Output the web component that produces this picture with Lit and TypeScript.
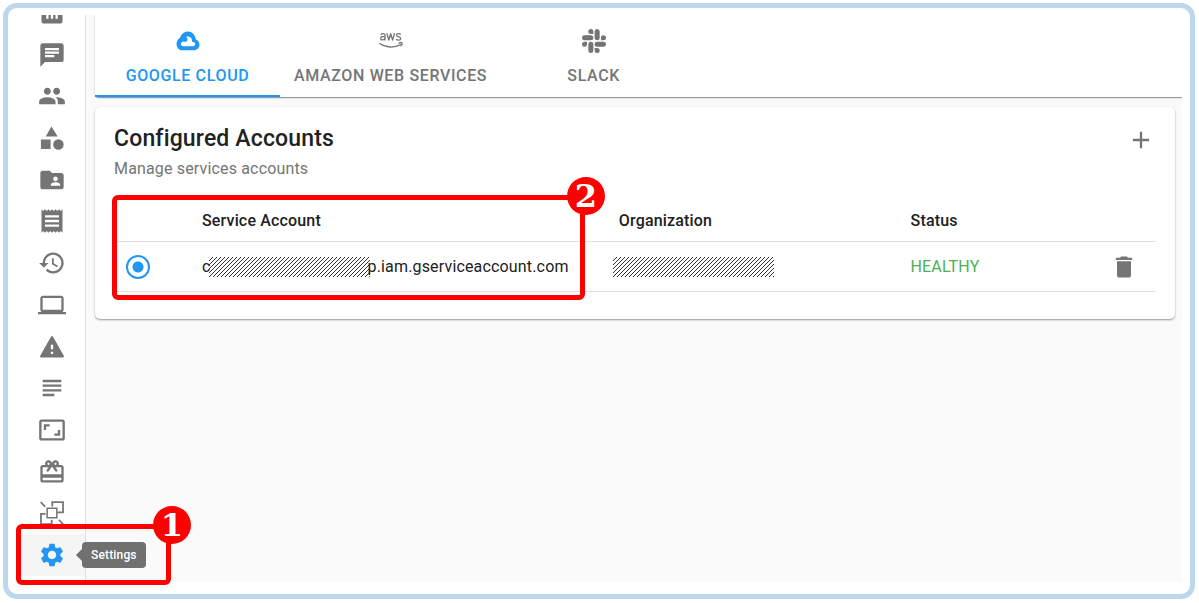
import { LitElement, html, css, svg } from "lit";
import { customElement, state } from "lit/decorators.js";

interface NavItem { label: string; path: string; }

const NAV: NavItem[] = [
  { label: "Dashboard", path: "M19 3H5c-1.1 0-2 .9-2 2v14c0 1.1.9 2 2 2h14c1.1 0 2-.9 2-2V5c0-1.100-.9-2-2-2zM9 17H7v-7h2v7zm4 0h-2V7h2v10zm4 0h-2v-4h2v4z" },
  { label: "Messages", path: "M20 2H4c-1.100 0-1.990.9-1.990 2L2 22l4-4h14c1.100 0 2-.9 2-2V4c0-1.100-.9-2-2-2zM6 9h12v2H6V9zm8 5H6v-2h8v2zm4-6H6V6h12v2z" },
  { label: "People", path: "M16 11c1.660 0 2.990-1.340 2.990-3S17.660 5 16 5c-1.660 0-3 1.340-3 3s1.340 3 3 3zm-8 0c1.660 0 2.990-1.340 2.990-3S9.660 5 8 5C6.340 5 5 6.340 5 8s1.340 3 3 3zm0 2c-2.330 0-7 1.170-7 3.500V19h14v-2.500c0-2.330-4.670-3.500-7-3.500zm8 0c-.290 0-.620.020-.970.050 1.160.840 1.970 1.970 1.970 3.450V19h6v-2.500c0-2.330-4.670-3.500-7-3.500z" },
  { label: "Categories", path: "M11.500 2.200 6.600 10.800h10.300zM2.500 13.200h8.300v8.300H2.500zM17.500 13a4.500 4.500 0 1 0 0 9a4.500 4.500 0 0 0 0-9z" },
  { label: "Shared folder", path: "M20 6h-8l-2-2H4c-1.100 0-1.990.9-1.990 2L2 18c0 1.100.9 2 2 2h16c1.100 0 2-.9 2-2V8c0-1.100-.9-2-2-2zm-5 3c1.100 0 2 .9 2 2s-.9 2-2 2-2-.9-2-2 .9-2 2-2zm4 8h-8v-1c0-1.330 2.670-2 4-2s4 .670 4 2v1z" },
  { label: "Receipts", path: "M18 17H6v-2h12v2zm0-4H6v-2h12v2zm0-4H6V7h12v2zM3 22l1.500-1.500L6 22l1.500-1.500L9 22l1.500-1.500L12 22l1.500-1.500L15 22l1.500-1.500L18 22l1.500-1.500L21 22V2l-1.500 1.500L18 2l-1.500 1.500L15 2l-1.500 1.500L12 2l-1.500 1.500L9 2 7.500 3.500 6 2 4.500 3.500 3 2v20z" },
  { label: "History", path: "M13 3c-4.970 0-9 4.030-9 9H1l3.890 3.890.070.140L9 12H6c0-3.870 3.130-7 7-7s7 3.130 7 7-3.130 7-7 7c-1.930 0-3.680-.790-4.940-2.060l-1.420 1.420C8.270 19.990 10.510 21 13 21c4.970 0 9-4.030 9-9s-4.030-9-9-9zm-1 5v5l4.280 2.540.720-1.210-3.500-2.080V8H12z" },
  { label: "Devices", path: "M20 18c1.100 0 1.990-.9 1.990-2L22 6c0-1.100-.9-2-2-2H4c-1.100 0-2 .9-2 2v10c0 1.100.9 2 2 2H0v2h24v-2h-4zM4 6h16v10H4V6z" },
  { label: "Alerts", path: "M2.700 21h18.600c.8 0 1.200-.8.8-1.500L12.900 3.200c-.4-.7-1.400-.7-1.800 0L1.900 19.500c-.4.700 0 1.500.8 1.500zM13 18h-2v-2h2v2zm0-4h-2v-4h2v4z" },
  { label: "Notes", path: "M14 17H4v2h10v-2zm6-8H4v2h16V9zM4 15h16v-2H4v2zM4 5v2h16V5H4z" },
  { label: "Display", path: "M19 12h-2v3h-3v2h5v-5zM7 9h3V7H5v5h2V9zm14-6H3c-1.100 0-2 .9-2 2v14c0 1.100.9 2 2 2h18c1.100 0 2-.9 2-2V5c0-1.100-.9-2-2-2zm0 16.010H3V4.990h18v14.020z" },
  { label: "Rewards", path: "M20 6h-2.180c.110-.310.180-.650.180-1 0-1.660-1.340-3-3-3-1.050 0-1.960.540-2.500 1.350l-.5.670-.5-.680C10.960 2.540 10.050 2 9 2 7.340 2 6 3.340 6 5c0 .350.070.690.180 1H4c-1.110 0-1.990.890-1.990 2L2 19c0 1.110.890 2 2 2h16c1.110 0 2-.890 2-2V8c0-1.110-.890-2-2-2zm-5-2c.550 0 1 .450 1 1s-.450 1-1 1-1-.450-1-1 .450-1 1-1zM9 4c.550 0 1 .450 1 1s-.450 1-1 1-1-.450-1-1 .450-1 1-1zm11 15H4v-2h16v2zm0-5H4V8h5.080L7 10.830 8.620 12 11 8.760l1-1.360 1 1.360L15.380 12 17 10.830 14.920 8H20v6z" },
  { label: "Resources", path: "M11.500 2h10.700v10.300h-5.400v-1.500h3.900V3.500H13V6.400h-1.500zM7.200 7.200h9.600v9.600H7.200zM8.500 8.500v7h7v-7zM1.800 12h4.700v1.500H3.300v7.200h7.700v-3h1.500v4.500H1.800zM2.800 2.200l3.800 3.800-1 1-3.800-3.800zM18.400 17.400l3.800 3.800-1 1-3.800-3.800z" },
  { label: "Settings", path: "M19.140 12.940c.040-.3.060-.610.060-.940 0-.320-.020-.640-.070-.940l2.030-1.580c.180-.140.230-.410.120-.610l-1.920-3.320c-.120-.220-.370-.290-.590-.220l-2.390.960c-.5-.380-1.030-.7-1.620-.940l-.360-2.540c-.040-.240-.240-.410-.480-.410h-3.840c-.240 0-.430.170-.470.410l-.360 2.540c-.590.240-1.130.570-1.620.940l-2.390-.960c-.220-.080-.470 0-.590.220L2.740 8.870c-.120.210-.080.470.120.610l2.030 1.580c-.050.3-.090.630-.090.940s.020.640.070.940l-2.030 1.580c-.180.140-.230.410-.120.610l1.920 3.320c.120.220.370.290.590.220l2.390-.960c.5.380 1.030.7 1.620.940l.360 2.540c.050.240.240.410.480.410h3.840c.240 0 .440-.170.470-.410l.360-2.540c.590-.240 1.130-.560 1.620-.940l2.390.960c.220.080.470 0 .590-.220l1.920-3.320c.120-.220.070-.470-.120-.610l-2.010-1.580zM12 15.600c-1.980 0-3.600-1.620-3.600-3.600s1.620-3.600 3.600-3.600 3.600 1.620 3.600 3.600-1.620 3.600-3.600 3.600z" },
];

const cloudGlyph = svg`
  <path fill-rule="evenodd" d="M6.300 21.300H17.800C21 21.300 23.500 18.800 23.500 15.800 23.500 13.300 22 11.300 19.900 10.500 19.200 5.800 16 2.500 12 2.500 8.300 2.500 5.200 4.900 4.200 8.400 1.900 9.600.5 12.100.5 14.900.5 18.500 3 21.300 6.300 21.300z
    M7.500 17.200C6 17.200 5 16.200 5 14.900 5 13.500 6.100 12.500 7.600 12.500 8.500 13.100 10.200 12.900 11 11.900 11.900 10.800 11.700 9.300 10.700 8.500L10.200 7.900C11.400 7.300 13 7.300 14.200 8.200 15.600 9.200 16.200 10.900 16.100 12.700 17.800 12.600 19.200 13.600 19.200 15 19.200 16.300 18.200 17.200 16.900 17.200z"/>`;

const awsGlyph = svg`
  <g fill="none" stroke="currentColor" stroke-width="1.300" stroke-linecap="round" stroke-linejoin="round">
    <path d="M2 5.300c1.200-.9 4-1 4 .9v4.900M6 7.800c-2-.5-4.300-.3-4.300 1.600 0 2.200 3.300 2 4.300-.1"/>
    <path d="M8 4.700l1.800 6.400 1.900-6.400 1.900 6.400 1.800-6.400"/>
    <path d="M21.500 5.200c-1.200-.8-4-.8-4 1 0 2.100 4.300 1.200 4.300 3.200 0 2-3 2-4.400 1.100"/>
    <path d="M.8 14.600c6 4.400 15 4.300 20.600 1.200"/>
    <path d="M20 14.100c1-.5 2.700-.5 3-.1.200.5-.2 2-1.100 2.900"/>
  </g>`;

const slackGlyph = svg`
  <path d="M8.840 0a2.520 2.520 0 0 0 0 5.040h2.520V2.520A2.520 2.520 0 0 0 8.840 0zM2.520 6.310h6.320a2.520 2.520 0 0 1 0 5.050H2.520a2.520 2.520 0 0 1 0-5.050zM18.960 8.840a2.520 2.520 0 1 1 2.520 2.520h-2.520zM12.640 2.520a2.520 2.520 0 0 1 5.050 0v6.320a2.520 2.520 0 0 1-5.050 0zM15.160 18.960a2.520 2.520 0 1 1-2.520 2.520v-2.520zM15.160 12.640h6.320a2.520 2.520 0 0 1 0 5.050h-6.320a2.520 2.520 0 0 1 0-5.050zM5.040 15.160a2.520 2.520 0 1 1-2.520-2.520h2.520zM6.310 15.160a2.520 2.520 0 0 1 5.050 0v6.320a2.520 2.520 0 0 1-5.050 0z"/>`;

const TABS = [
  { label: "Google Cloud", glyph: cloudGlyph },
  { label: "Amazon Web Services", glyph: awsGlyph },
  { label: "Slack", glyph: slackGlyph },
];

@customElement("app-root")
export class AppRoot extends LitElement {
  @state() private tab = 0;

  static styles = css`
    :host {
      display: block;
      box-sizing: border-box;
      min-height: 100vh;
      padding: 3px 4px 4px 3px;
      background: #fff;
      color: #212121;
      font: 16px/24px Roboto, "Liberation Sans", sans-serif;
      letter-spacing: 0.01em;
    }
    * { box-sizing: border-box; }
    button { border: 0; padding: 0; background: none; color: inherit; font: inherit; cursor: pointer; }
    .frame {
      min-height: calc(100vh - 7px);
      display: flex;
      border: 5px solid #bdd7ee;
      border-radius: 14px;
      padding: 7px 8px 12px 0;
    }
    .side {
      flex: none;
      width: 78px;
      display: flex;
      flex-direction: column;
      border-right: 1px solid #e0e0e0;
      position: relative;
      clip-path: inset(0 -120px -12px 0);
    }
    .nav {
      flex: 1;
      display: grid;
      grid-auto-rows: 1fr;
      margin: -23px 0 6px;
    }
    .nav-item {
      display: grid;
      place-items: center;
      padding-left: 11px;
      color: #757575;
      text-decoration: none;
      position: relative;
    }
    .nav-item.on { color: #2196f3; background: linear-gradient(90deg, transparent 13px, #f5f5f5 13px); }
    .icon { display: block; width: 28px; height: 28px; fill: currentColor; }
    .tip {
      position: absolute;
      left: 74px;
      top: 8px;
      padding: 0 9px;
      border-radius: 4px;
      background: #707070;
      color: #fff;
      font-size: 12px;
      font-weight: 500;
      line-height: 26px;
    }
    .tip::before {
      content: "";
      position: absolute;
      left: -6px;
      top: 7px;
      border: solid transparent;
      border-width: 6px 6px 6px 0;
      border-right-color: #707070;
    }
    .main { flex: 1; min-width: 0; background: #fafafa; padding-left: 9px; }
    .tabs {
      display: flex;
      background: #fff;
      border-bottom-left-radius: 4px;
      box-shadow: 0 1px 1px rgba(0,0,0,.3), 0 1px 2px rgba(0,0,0,.2);
      clip-path: inset(0 0 -4px -2px);
    }
    .tab {
      min-width: 185px;
      display: flex;
      flex-direction: column;
      align-items: center;
      gap: 11px;
      padding: 14px 14px 7px;
      border-bottom: 2px solid transparent;
      color: #757575;
      font-weight: 500;
      letter-spacing: 0.04em;
      text-transform: uppercase;
    }
    .tab.on { color: #2196f3; border-color: #2196f3; }
    .tab .icon { width: 24px; height: 24px; }
    .card {
      margin: 10px 7px 0 0;
      padding: 18px 19px 27px;
      background: #fff;
      border-radius: 5px;
      box-shadow: 0 1px 2px rgba(0,0,0,.4);
    }
    .head { display: flex; justify-content: space-between; }
    .title { margin: 0; font-size: 23px; font-weight: 500; line-height: 28px; }
    .sub { margin: 4px 0 14px; color: #757575; line-height: 24px; }
    .add { align-self: flex-start; margin: 1px 1px 0 0; color: #757575; }
    .holder { position: relative; }
    .table { width: 100%; border-collapse: collapse; table-layout: fixed; text-align: left; }
    .table th, .table td { padding: 0 18px; border-bottom: 1px solid #e0e0e0; white-space: nowrap; }
    .table th { height: 46px; padding-top: 6px; font-weight: 500; }
    .table td { height: 50px; padding-top: 1px; }
    .table .c-pick { width: 70px; padding-left: 12px; padding-right: 12px; }
    .c-acct { width: 40%; }
    .c-org { width: 28%; }
    .table .c-del { width: 64px; }
    .del { display: block; color: #757575; }
    .pick {
      appearance: none;
      display: block;
      width: 24px;
      height: 24px;
      margin: 0;
      border: 2px solid #2196f3;
      border-radius: 50%;
      background: radial-gradient(circle, #2196f3 5px, transparent 6px);
    }
    .healthy { color: #4caf50; }
    .hatch { display: inline-block; width: 161px; height: 20px; vertical-align: middle; }
    .acct-hatch { margin: 0 -2px; }
    .org-hatch { margin-left: -6px; }
    .callout { position: absolute; border: 5px solid #f00; border-radius: 6px; pointer-events: none; }
    .badge {
      position: absolute;
      top: -23px;
      right: -25px;
      width: 38px;
      height: 38px;
      border-radius: 50%;
      background: #f00;
      color: #fff;
      font: bold 32px/38px "DejaVu Serif", serif;
      letter-spacing: 0;
      text-align: center;
    }
    .callout-nav { left: 8px; bottom: -3px; width: 155px; height: 61px; }
    .callout-acct { left: -2px; top: 0; width: 473px; height: 105px; }
  `;

  private hatch(id: string) {
    return svg`<pattern id=${id} width="4" height="4" patternUnits="userSpaceOnUse">
      <path d="M3 0h1v1h-1zM2 1h1v1h-1zM1 2h1v1h-1zM0 3h1v1h-1z" fill="#333"/></pattern>
      <rect width="100%" height="100%" fill="url(#${id})"/>`;
  }

  render() {
    return html`
      <div class="frame">
        <aside class="side">
          <nav class="nav" aria-label="Main">
            ${NAV.map((n, i) => html`
              <a class="nav-item ${i === NAV.length - 1 ? "on" : ""}" href="#" aria-label=${n.label}>
                <svg class="icon" viewBox="0 0 24 24"><path d=${n.path} /></svg>
                ${i === NAV.length - 1 ? html`<span class="tip">Settings</span>` : ""}
              </a>`)}
          </nav>
          <div class="callout callout-nav"><span class="badge">1</span></div>
        </aside>
        <main class="main">
          <div class="tabs" role="tablist">
            ${TABS.map((t, i) => html`
              <button class="tab ${i === this.tab ? "on" : ""}" role="tab"
                aria-selected=${i === this.tab ? "true" : "false"} @click=${() => (this.tab = i)}>
                <svg class="icon" viewBox="0 0 24 24">${t.glyph}</svg>
                <span>${t.label}</span>
              </button>`)}
          </div>
          <section class="card">
            <header class="head">
              <div>
                <h1 class="title">Configured Accounts</h1>
                <p class="sub">Manage services accounts</p>
              </div>
              <button class="add" aria-label="Add account">
                <svg class="icon" viewBox="0 0 24 24"><path d="M19 13h-6v6h-2v-6H5v-2h6V5h2v6h6v2z" /></svg>
              </button>
            </header>
            <div class="holder">
              <table class="table">
                <thead>
                  <tr>
                    <th class="c-pick"></th>
                    <th class="c-acct">Service Account</th>
                    <th class="c-org">Organization</th>
                    <th>Status</th>
                    <th class="c-del"></th>
                  </tr>
                </thead>
                <tbody>
                  <tr>
                    <td class="c-pick"><input class="pick" type="radio" name="account" aria-label="Use this account" checked /></td>
                    <td>c<svg class="hatch acct-hatch">${this.hatch("h1")}</svg>p.iam.gserviceaccount.com</td>
                    <td><svg class="hatch org-hatch">${this.hatch("h2")}</svg></td>
                    <td class="healthy">HEALTHY</td>
                    <td><button class="del" aria-label="Delete account">
                      <svg class="icon" viewBox="0 0 24 24"><path d="M6 19c0 1.100.9 2 2 2h8c1.100 0 2-.9 2-2V7H6v12zM19 4h-3.500l-1-1h-5l-1 1H5v2h14V4z" /></svg>
                    </button></td>
                  </tr>
                </tbody>
              </table>
              <div class="callout callout-acct"><span class="badge">2</span></div>
            </div>
          </section>
        </main>
      </div>
    `;
  }
}
